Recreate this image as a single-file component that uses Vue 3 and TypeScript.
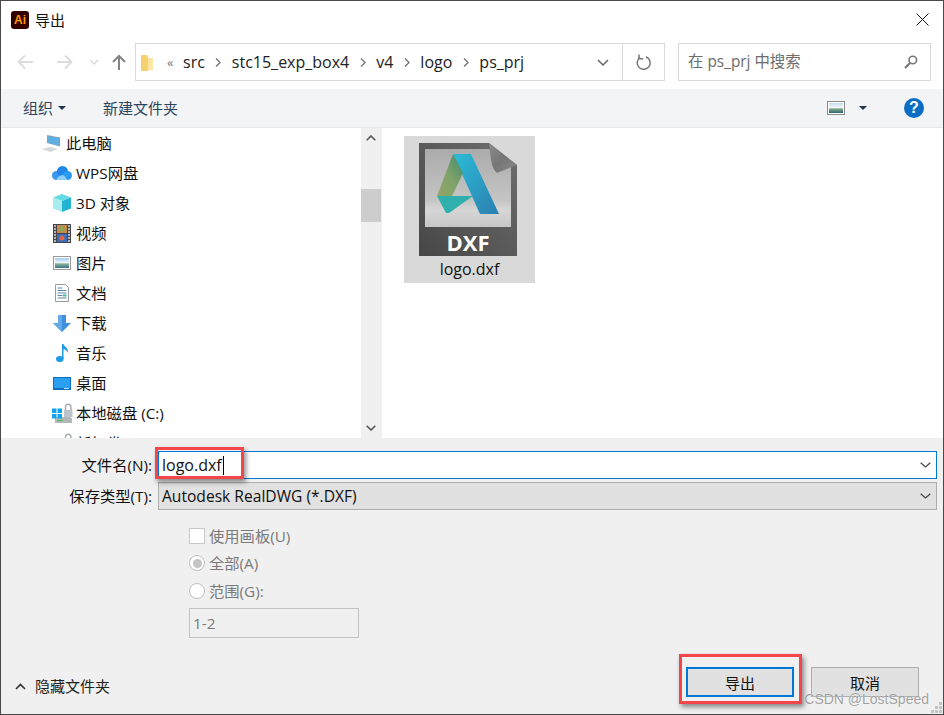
<script setup lang="ts">
interface Place { label: string; icon: string; top?: boolean }
const places: Place[] = [
  { label: '此电脑', icon: 'pc', top: true },
  { label: 'WPS网盘', icon: 'cloud' },
  { label: '3D 对象', icon: 'cube' },
  { label: '视频', icon: 'film' },
  { label: '图片', icon: 'pic' },
  { label: '文档', icon: 'doc' },
  { label: '下载', icon: 'down' },
  { label: '音乐', icon: 'music' },
  { label: '桌面', icon: 'desk' },
  { label: '本地磁盘 (C:)', icon: 'disk' },
  { label: '新加卷 (D:)', icon: 'disk' },
]
const crumbs = ['stc15_exp_box4', 'v4', 'logo', 'ps_prj']
</script>

<template>
  <div class="win">
    <header class="title">
      <div class="ai">Ai</div>
      <span class="title-text">导出</span>
      <svg class="close" width="13" height="13" viewBox="0 0 13 13"><path d="M.5.5l12 12M12.500.5l-12 12" stroke="#111" stroke-width="1" fill="none" /></svg>
    </header>

    <nav class="nav">
      <div class="arrows">
        <svg width="20" height="16" viewBox="0 0 20 16"><path d="M2 8h15M9 1.500L2.500 8 9 14.500" stroke="#dcdcdc" stroke-width="1.800" fill="none" /></svg>
        <svg width="20" height="16" viewBox="0 0 20 16"><path d="M3 8h15M11 1.500L17.500 8 11 14.500" stroke="#dcdcdc" stroke-width="1.800" fill="none" /></svg>
        <svg width="10" height="6" viewBox="0 0 10 6"><path d="M1 1l4 4 4-4" stroke="#dcdcdc" stroke-width="1.500" fill="none" /></svg>
        <svg width="14" height="17" viewBox="0 0 14 17"><path d="M7 16V2M1 8l6-6 6 6" stroke="#848484" stroke-width="2" fill="none" /></svg>
      </div>
      <div class="address">
        <svg class="folder" width="13" height="17" viewBox="0 0 13 17">
          <path d="M0 1h6l1 2v14H0z" fill="#f6d26f" />
          <path d="M7 4h5v12H7z" fill="#fbe6a5" />
        </svg>
        <span class="chev2">«</span>
        <span class="crumb first">src</span>
        <template v-for="c in crumbs" :key="c">
          <svg class="sep" width="6" height="9" viewBox="0 0 6 9"><path d="M1 .5l4 4-4 4" stroke="#777" stroke-width="1.400" fill="none" /></svg>
          <span class="crumb">{{ c }}</span>
        </template>
        <svg class="addr-down" width="12" height="7" viewBox="0 0 12 7"><path d="M1 1l5 5 5-5" stroke="#666" stroke-width="1.500" fill="none" /></svg>
        <div class="refresh">
          <svg width="16" height="17" viewBox="0 0 16 17"><path d="M4 3.500A6.500 6.500 0 1 0 10 2.800" stroke="#777" stroke-width="1.500" fill="none" /><path d="M3 .5v4.200h4.200" stroke="#777" stroke-width="1.500" fill="none" /></svg>
        </div>
      </div>
      <div class="search">
        <span>在 ps_prj 中搜索</span>
        <svg width="14" height="14" viewBox="0 0 14 14"><circle cx="8.800" cy="5" r="3.800" stroke="#777" stroke-width="1.600" fill="none" /><path d="M6 8l-5 5" stroke="#777" stroke-width="2.200" /></svg>
      </div>
    </nav>

    <div class="toolbar">
      <span class="tool">组织</span>
      <i class="caret organize" />
      <span class="tool newf">新建文件夹</span>
      <svg class="view" width="18" height="14" viewBox="0 0 18 14">
        <defs><linearGradient id="vsky" x1="0" x2="0" y1="0" y2="1"><stop offset="0" stop-color="#c3def3" /><stop offset=".45" stop-color="#f3f6f7" /><stop offset=".6" stop-color="#7fa88c" /><stop offset="1" stop-color="#2b6470" /></linearGradient></defs>
        <rect x=".5" y=".5" width="17" height="13" fill="#fff" stroke="#8c8c8c" /><rect x="2" y="2" width="14" height="10" fill="url(#vsky)" />
      </svg>
      <i class="caret vcaret" />
      <div class="help">?</div>
    </div>

    <main class="main">
      <aside class="side">
        <div v-for="p in places" :key="p.label" class="row" :class="{ top: p.top }">
          <span class="ico">
            <svg v-if="p.icon === 'pc'" width="20" height="18" viewBox="0 0 20 18">
              <path d="M5 1l13 2.500v9L5 9z" fill="#7fa3bd" /><path d="M6 2.200l11 2.100v7L6 8.500z" fill="#5fb0e2" />
              <path d="M0 15l8-2 8 2-8 3z" fill="#d5d8da" />
            </svg>
            <svg v-else-if="p.icon === 'cloud'" width="20" height="14" viewBox="0 0 20 14">
              <circle cx="4.500" cy="9.500" r="4.500" fill="#3b97f0" /><circle cx="10.500" cy="5.500" r="5.500" fill="#1f86ea" /><circle cx="15.500" cy="9.500" r="4.500" fill="#2a9bf2" />
              <path d="M4.500 14c.5-3 4-5.500 7.500-4.500l3.500 4.500z" fill="#8ccffb" />
            </svg>
            <svg v-else-if="p.icon === 'cube'" width="18" height="18" viewBox="0 0 18 18">
              <path d="M9 0l9 3.500L9 7 0 3.500z" fill="#63dbe6" /><path d="M0 3.500L9 7v11l-9-3.500z" fill="#a8ecef" /><path d="M18 3.500L9 7v11l9-3.500z" fill="#25b3d3" />
            </svg>
            <svg v-else-if="p.icon === 'film'" width="18" height="19" viewBox="0 0 18 19">
              <rect width="18" height="19" fill="#45454a" /><rect x="4" y="1" width="10" height="8" fill="#c58a4a" /><rect x="4" y="10" width="10" height="8" fill="#3a6fbe" />
              <circle cx="9" cy="5" r="2.500" fill="#8a5" /><circle cx="9" cy="14" r="2.500" fill="#d64" />
              <path d="M1 2h2M1 5h2M1 8h2M1 11h2M1 14h2M1 17h2M15 2h2M15 5h2M15 8h2M15 11h2M15 14h2M15 17h2" stroke="#ddd" stroke-width="1.300" />
            </svg>
            <svg v-else-if="p.icon === 'pic'" width="18" height="14" viewBox="0 0 18 14">
              <defs><linearGradient id="psky" x1="0" x2="0" y1="0" y2="1"><stop offset="0" stop-color="#9ccbf0" /><stop offset=".45" stop-color="#eef5f8" /><stop offset=".6" stop-color="#8ab09a" /><stop offset="1" stop-color="#3a7488" /></linearGradient></defs>
              <rect x=".5" y=".5" width="17" height="13" fill="#fff" stroke="#9a9a9a" /><rect x="2" y="2" width="14" height="10" fill="url(#psky)" />
            </svg>
            <svg v-else-if="p.icon === 'doc'" width="14" height="18" viewBox="0 0 14 18">
              <path d="M.5.5h10l3 3v14H.5z" fill="#fff" stroke="#9a9a9a" />
              <path d="M2.500 4h5M2.500 6.500h9M2.500 9h9M2.500 11.500h5M2.500 14h9" stroke="#5c86a8" stroke-width="1" /><rect x="8" y="10.500" width="3.500" height="2" fill="#4b9" />
            </svg>
            <svg v-else-if="p.icon === 'down'" width="18" height="17" viewBox="0 0 18 17">
              <path d="M5 0h8v8h5l-9 9-9-9h5z" fill="#3f8fdc" /><path d="M5 0h4v17L0 8h5z" fill="#62aaec" />
            </svg>
            <svg v-else-if="p.icon === 'music'" width="13" height="18" viewBox="0 0 13 18">
              <ellipse cx="3.800" cy="15" rx="3.800" ry="3" fill="#1d9be8" /><path d="M6 15V0h1.500c.5 3 5.500 4 4.500 9-.5-2-3-3.500-4.500-4v10z" fill="#1d9be8" />
            </svg>
            <svg v-else-if="p.icon === 'desk'" width="18" height="13" viewBox="0 0 18 13">
              <rect width="18" height="13" fill="#0f6fc0" /><rect x="1" y="1" width="16" height="10" fill="#2aa0f2" /><path d="M11 11.500h5" stroke="#bfe4ff" />
            </svg>
            <svg v-else width="21" height="20" viewBox="0 0 21 20">
              <path d="M13.500 7V4a2.700 2.700 0 0 1 5.400 0v3" stroke="#a9aeb3" stroke-width="1.500" fill="none" /><rect x="12" y="7" width="8.500" height="7" fill="#bcc3c9" />
              <path d="M3 14h15l2 1.500V20H3z" fill="#b3b8bb" /><path d="M5 17.500h6" stroke="#55b85a" stroke-width="1.200" />
              <path d="M0 5.500h4.500V10H0zM5.500 5.500H10V10H5.500zM0 11h4.500v4.500H0zM5.500 11H10v4.500H5.500z" fill="#0ea5ec" />
            </svg>
          </span>
          <span class="row-text">{{ p.label }}</span>
        </div>
      </aside>
      <div class="scroll">
        <svg width="10" height="6" viewBox="0 0 10 6"><path d="M.7 5.300L5 1l4.300 4.300" stroke="#555" stroke-width="1.600" fill="none" /></svg>
        <div class="thumb" />
        <svg class="sdown" width="10" height="6" viewBox="0 0 10 6"><path d="M.7.7L5 5 9.300.7" stroke="#555" stroke-width="1.600" fill="none" /></svg>
      </div>
      <section class="files">
        <div class="tile">
          <div class="dxf">
            <svg class="dxf-art" width="98" height="113" viewBox="0 0 98 113">
              <defs>
                <linearGradient id="page" x1="0" x2="1" y1="1" y2="0"><stop offset="0" stop-color="#474747" /><stop offset=".5" stop-color="#5a5a5a" /><stop offset="1" stop-color="#6e6e6e" /></linearGradient>
                <linearGradient id="inner" x1="0" x2="0" y1="0" y2="1"><stop offset="0" stop-color="#ababab" /><stop offset=".65" stop-color="#c4c4c4" /><stop offset=".78" stop-color="#d6d6d6" /><stop offset="1" stop-color="#c6c6c6" /></linearGradient>
                <linearGradient id="fold" x1="0" x2="1" y1="0" y2="1"><stop offset="0" stop-color="#8c8c8c" /><stop offset=".5" stop-color="#767676" /><stop offset="1" stop-color="#8a8a8a" /></linearGradient>
                <linearGradient id="blue" x1="0" x2="1" y1="0" y2="1"><stop offset="0" stop-color="#2bbcd8" /><stop offset="1" stop-color="#2c7fae" /></linearGradient>
                <linearGradient id="green" x1="1" x2="0" y1="0" y2="1"><stop offset="0" stop-color="#3e8a6e" /><stop offset=".5" stop-color="#7da268" /><stop offset="1" stop-color="#95a668" /></linearGradient>
              </defs>
              <path d="M0 0H70L98 22V113H0z" fill="url(#page)" />
              <path d="M6 6H70L92 24V84H6z" fill="url(#inner)" />
              <path d="M70 0L98 22 78 30C71 24 72 12 70 0z" fill="url(#fold)" />
              <path d="M34 11H52L80 71H61z" fill="url(#blue)" />
              <path d="M34 11L18 53H33L44 30z" fill="url(#green)" />
              <path d="M18 53H54L30 70 27 70z" fill="#2fb0ad" />
            </svg>
            <span class="dxf-label">DXF</span>
          </div>
          <span class="tile-name">logo.dxf</span>
        </div>
      </section>
    </main>

    <footer class="bottom">
      <div class="form-row first-row">
        <label class="flabel">文件名(N):</label>
        <div class="input active"><span class="val">logo.dxf</span><i class="cursor" />
          <svg width="11" height="6" viewBox="0 0 11 6"><path d="M.7.7L5.500 5 10.300.7" stroke="#444" stroke-width="1.200" fill="none" /></svg>
        </div>
      </div>
      <div class="form-row">
        <label class="flabel">保存类型(T):</label>
        <div class="input select"><span>Autodesk RealDWG (*.DXF)</span>
          <svg width="11" height="6" viewBox="0 0 11 6"><path d="M.7.7L5.500 5 10.300.7" stroke="#444" stroke-width="1.200" fill="none" /></svg>
        </div>
      </div>
      <div class="opts">
        <div class="opt"><i class="check" /><span>使用画板(U)</span></div>
        <div class="opt"><i class="radio on" /><span>全部(A)</span></div>
        <div class="opt"><i class="radio" /><span>范围(G):</span></div>
        <div class="range">1-2</div>
      </div>
      <div class="actions">
        <div class="hide">
          <svg width="11" height="7" viewBox="0 0 11 7"><path d="M1 6l4.500-4.500L10 6" stroke="#333" stroke-width="1.600" fill="none" /></svg>
          <span>隐藏文件夹</span>
        </div>
        <button class="btn primary">导出</button>
        <button class="btn">取消</button>
      </div>
      <svg class="grip" width="11" height="11" viewBox="0 0 11 11"><path d="M8 0h3v3H8zM4 4h3v3H4zM8 4h3v3H8zM0 8h3v3H0zM4 8h3v3H4zM8 8h3v3H8z" fill="#c4c4c4" /></svg>
    </footer>

    <div class="mark mark-name" />
    <div class="mark mark-btn" />
    <div class="watermark">CSDN @LostSpeed</div>
  </div>
</template>

<style>
html, body { margin: 0; background: #fff; }
</style>

<style scoped>
.win {
  position: relative;
  width: 944px;
  height: 715px;
  box-sizing: border-box;
  border: 1px solid #4a4a4a;
  display: flex;
  flex-direction: column;
  overflow: hidden;
  background: #fff;
  color: #111;
  font: 15.3px/20px "Open Sans", "Noto Sans CJK SC", sans-serif;
}
.title { height: 37px; display: flex; align-items: center; padding: 0 14px 0 10px; flex: none; }
.ai {
  width: 18px; height: 18px; border-radius: 3px; background: #330000; color: #ff9a00;
  font: 700 12px/18px "Liberation Sans", sans-serif; text-align: center;
}
.title-text { margin-left: 6px; flex: 1; font-size: 15px; }
.nav { height: 38px; margin-top: 5px; display: flex; flex: none; padding-right: 12px; }
.arrows { width: 134px; display: flex; align-items: center; flex: none; padding-left: 15px; box-sizing: border-box; }
.arrows svg:nth-child(2) { margin-left: 18px; }
.arrows svg:nth-child(3) { margin-left: 15px; }
.arrows svg:nth-child(4) { margin-left: 13px; }
.address {
  width: 530px; box-sizing: border-box; border: 1px solid #d9d9d9; display: flex; align-items: center;
  padding-left: 5px; color: #222; flex: none; font-size: 16px;
}
.folder { flex: none; }
.chev2 { margin-left: 13px; color: #777; font-size: 13px; width: 16px; }
.crumb.first { margin-left: 0; }
.sep { margin: 0 10.500px; flex: none; }
.addr-down { margin-left: auto; margin-right: 13px; }
.refresh { width: 41px; height: 100%; border-left: 1px solid #d9d9d9; display: flex; align-items: center; justify-content: center; }
.search {
  margin-left: 13px; width: 253px; box-sizing: border-box; border: 1px solid #d9d9d9; display: flex; align-items: center;
  justify-content: space-between; padding: 0 12px 0 9px; color: #6d6d6d; font-size: 15.400px;
}
.toolbar {
  margin-top: 8px; height: 38px; border-bottom: 1px solid #e8e9eb; background: #f3f4f6; display: flex; align-items: center;
  padding-left: 22px; padding-right: 19px; color: #2b4560; flex: none; font-size: 15px;
}
.caret { width: 0; height: 0; border: 4px solid transparent; border-top: 4px solid #1f3550; border-bottom: 0; }
.organize { margin-left: 5px; }
.newf { margin-left: 37px; }
.view { margin-left: auto; }
.vcaret { margin-left: 14px; }
.help {
  margin-left: 37px; width: 20px; height: 20px; border-radius: 50%; background: #0b6cc4; color: #fff; text-align: center;
  font: 700 16px/20px "Liberation Sans", sans-serif;
}
.main { height: 310px; display: flex; flex: none; overflow: hidden; }
.side { width: 360px; flex: none; overflow: hidden; padding-top: 0; }
.row { height: 30px; display: flex; align-items: center; padding-left: 50px; }
.row.top { padding-left: 40px; }
.ico { width: 22px; height: 20px; display: flex; align-items: center; justify-content: center; margin-right: 3px; flex: none; }
.row-text { white-space: nowrap; }
.scroll { width: 20px; background: #f0f0f0; border-right: 1px solid #f0f0f0; flex: none; position: relative; display: flex; flex-direction: column; align-items: center; padding-top: 7px; box-sizing: content-box; }
.thumb { align-self: stretch; height: 33px; margin-top: 48px; background: #cdcdcd; }
.sdown { margin-top: auto; margin-bottom: 7px; }
.files { flex: 1; padding: 8px 0 0 22px; }
.tile { width: 131px; height: 147px; background: #d9d9d9; display: flex; flex-direction: column; align-items: center; }
.dxf { position: relative; width: 98px; height: 113px; margin: 7px 3px 0 0; }
.dxf-art { display: block; }
.dxf-label {
  position: absolute; left: 0; right: 0; bottom: 2px; text-align: center; color: #fff;
  font: 700 22px/24px "Open Sans", sans-serif;
}
.tile-name { margin-top: 3px; font-size: 16px; }
.bottom { position: relative; flex: 1; background: #f0f0f0; padding-top: 13px; min-height: 0; }
.form-row { display: flex; height: 28px; margin-bottom: 3px; padding-right: 6px; }
.flabel { width: 151px; text-align: right; line-height: 28px; flex: none; white-space: nowrap; }
.input {
  margin-left: 6px; flex: 1; box-sizing: border-box; display: flex; align-items: center; padding-left: 3px; padding-right: 5px;
  background: #fff; position: relative;
}
.input svg { margin-left: auto; }
.input.active { border: 1px solid #0078d7; height: 28px; }
.val { font-size: 16px; }
.input.select { background: #e1e1e1; border: 1px solid #adadad; font-size: 15.600px; color: #111; padding-left: 3px; }
.cursor { width: 1px; height: 19px; background: #000; margin-left: 1px; }
.opts { margin: 12px 0 0 188px; color: #7a7a7a; }
.opt { display: flex; align-items: center; height: 27.500px; gap: 4px; }
.check { width: 14px; height: 14px; background: #fff; border: 1px solid #c9c9c9; }
.radio { width: 14px; height: 14px; border: 1px solid #c0c0c0; border-radius: 50%; background: #fff; position: relative; }
.radio.on::after { content: ""; position: absolute; inset: 2.500px; border-radius: 50%; background: #c4c4c4; }
.range { height: 28px; margin-top: 3px; border: 1px solid #c3c3c3; line-height: 28px; padding-left: 3px; width: 165px; background: #f0f0f0; }
.actions { display: flex; align-items: center; position: absolute; left: 0; right: 0; bottom: 17px; height: 30px; }
.hide { display: flex; align-items: center; gap: 9px; padding: 8px 0 0 14px; margin-right: auto; color: #222; font-size: 15px; }
.btn {
  width: 108px; height: 30px; box-sizing: border-box; background: #e1e1e1; border: 1px solid #adadad; color: #111; margin-right: 24px;
  font: 15px "Open Sans", "Noto Sans CJK SC", sans-serif; padding: 0;
}
.btn.primary { border: 2px solid #0078d7; margin-right: 17px; }
.grip { position: absolute; right: 1px; bottom: 1px; }
.mark { position: absolute; box-sizing: border-box; border: 3px solid #f4454a; box-shadow: 2px 3px 5px rgba(0, 0, 0, .45); }
.mark-name { left: 154px; top: 446px; width: 89px; height: 32px; }
.mark-btn { left: 678px; top: 653px; width: 123px; height: 50px; }
.watermark {
  position: absolute; right: 14px; bottom: 7px; color: rgba(130, 130, 130, .75);
  font: 14px/16px "Liberation Sans", sans-serif; text-shadow: 0 0 1px #fff;
}
</style>
